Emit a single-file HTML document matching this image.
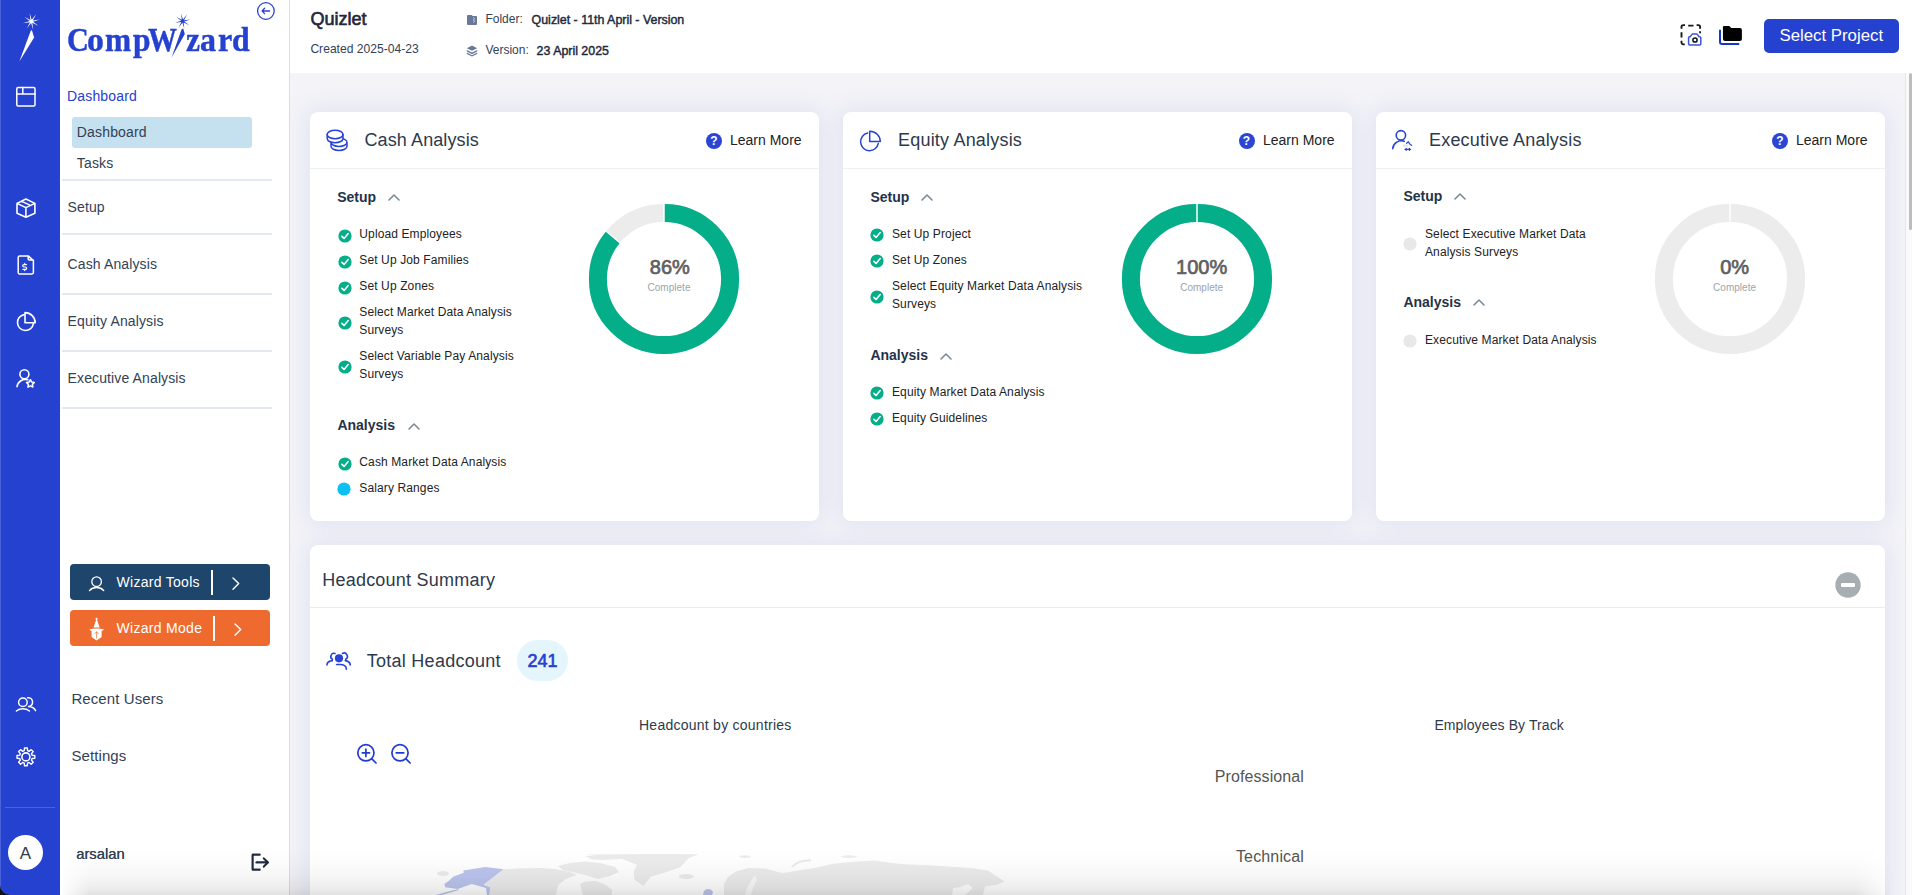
<!DOCTYPE html>
<html><head><meta charset="utf-8"><style>
html,body{margin:0;padding:0;width:1912px;height:895px;overflow:hidden;background:#fff;position:relative;}
body{font-family:"Liberation Sans",sans-serif;}
.t{position:absolute;white-space:nowrap;line-height:1;}
svg{overflow:visible;}
</style></head><body>
<div style="position:absolute;left:290px;top:0px;width:1622px;height:73px;background:#fff;"></div>
<div style="position:absolute;left:290px;top:73px;width:1615px;height:822px;background:#f3f3f8;"></div>
<div style="position:absolute;left:310px;top:112px;width:509px;height:409px;background:#fff;border-radius:8px;box-shadow:0 0 22px 4px rgba(120,130,200,0.13);"></div>
<div style="position:absolute;left:310px;top:168px;width:509px;height:1px;background:#eef0f3;"></div>
<div style="position:absolute;left:843px;top:112px;width:509px;height:409px;background:#fff;border-radius:8px;box-shadow:0 0 22px 4px rgba(120,130,200,0.13);"></div>
<div style="position:absolute;left:843px;top:168px;width:509px;height:1px;background:#eef0f3;"></div>
<div style="position:absolute;left:1376px;top:112px;width:509px;height:409px;background:#fff;border-radius:8px;box-shadow:0 0 22px 4px rgba(120,130,200,0.13);"></div>
<div style="position:absolute;left:1376px;top:168px;width:509px;height:1px;background:#eef0f3;"></div>
<div style="position:absolute;left:310px;top:545px;width:1575px;height:400px;background:#fff;border-radius:8px;box-shadow:0 0 22px 4px rgba(120,130,200,0.13);"></div>
<div style="position:absolute;left:303px;top:607px;width:1582px;height:1px;background:#e1eff9;"></div>
<div class="t" style="left:364.5px;top:130.76px;font-size:18px;color:#2d3a4b;font-weight:400;font-family:'Liberation Sans', sans-serif;letter-spacing:0.1px;">Cash Analysis</div>
<div class="t" style="left:730px;top:133.05px;font-size:14px;color:#222;font-weight:400;font-family:'Liberation Sans', sans-serif;">Learn More</div>
<svg style="position:absolute;left:706px;top:133px;" width="16" height="16" viewBox="0 0 16 16" fill="none"><circle cx="8" cy="8" r="8" fill="#2b45d4"/></svg>
<div class="t" style="left:714px;transform:translateX(-50%);top:135.44px;font-size:12px;color:#fff;font-weight:700;font-family:'Liberation Sans', sans-serif;">?</div>
<div class="t" style="left:337.2px;top:190.45px;font-size:14px;color:#1f3349;font-weight:700;font-family:'Liberation Sans', sans-serif;">Setup</div>
<svg style="position:absolute;left:388px;top:193px;" width="12" height="8" viewBox="0 0 12 8" fill="none"><path d="M1 7 L6 2 L11 7" stroke="#7b8a96" stroke-width="1.6" stroke-linecap="round" stroke-linejoin="round"/></svg>
<div class="t" style="left:359.3px;top:227.84px;font-size:12px;color:#222;font-weight:400;font-family:'Liberation Sans', sans-serif;letter-spacing:0.12px;">Upload Employees</div>
<svg style="position:absolute;left:337.5px;top:228.5px;" width="14" height="14" viewBox="0 0 14 14" fill="none"><circle cx="7" cy="7" r="6.6" fill="#03ae88"/><path d="M3.9 7.3 L6.1 9.4 L10.2 4.6" stroke="#fff" stroke-width="1.6" stroke-linecap="round" stroke-linejoin="round"/></svg>
<div class="t" style="left:359.3px;top:253.84px;font-size:12px;color:#222;font-weight:400;font-family:'Liberation Sans', sans-serif;letter-spacing:0.12px;">Set Up Job Families</div>
<svg style="position:absolute;left:337.5px;top:254.5px;" width="14" height="14" viewBox="0 0 14 14" fill="none"><circle cx="7" cy="7" r="6.6" fill="#03ae88"/><path d="M3.9 7.3 L6.1 9.4 L10.2 4.6" stroke="#fff" stroke-width="1.6" stroke-linecap="round" stroke-linejoin="round"/></svg>
<div class="t" style="left:359.3px;top:279.84px;font-size:12px;color:#222;font-weight:400;font-family:'Liberation Sans', sans-serif;letter-spacing:0.12px;">Set Up Zones</div>
<svg style="position:absolute;left:337.5px;top:280.5px;" width="14" height="14" viewBox="0 0 14 14" fill="none"><circle cx="7" cy="7" r="6.6" fill="#03ae88"/><path d="M3.9 7.3 L6.1 9.4 L10.2 4.6" stroke="#fff" stroke-width="1.6" stroke-linecap="round" stroke-linejoin="round"/></svg>
<div class="t" style="left:359.3px;top:305.84px;font-size:12px;color:#222;font-weight:400;font-family:'Liberation Sans', sans-serif;letter-spacing:0.12px;">Select Market Data Analysis</div>
<div class="t" style="left:359.3px;top:323.84px;font-size:12px;color:#222;font-weight:400;font-family:'Liberation Sans', sans-serif;letter-spacing:0.12px;">Surveys</div>
<svg style="position:absolute;left:337.5px;top:315.5px;" width="14" height="14" viewBox="0 0 14 14" fill="none"><circle cx="7" cy="7" r="6.6" fill="#03ae88"/><path d="M3.9 7.3 L6.1 9.4 L10.2 4.6" stroke="#fff" stroke-width="1.6" stroke-linecap="round" stroke-linejoin="round"/></svg>
<div class="t" style="left:359.3px;top:349.84px;font-size:12px;color:#222;font-weight:400;font-family:'Liberation Sans', sans-serif;letter-spacing:0.12px;">Select Variable Pay Analysis</div>
<div class="t" style="left:359.3px;top:367.84px;font-size:12px;color:#222;font-weight:400;font-family:'Liberation Sans', sans-serif;letter-spacing:0.12px;">Surveys</div>
<svg style="position:absolute;left:337.5px;top:359.5px;" width="14" height="14" viewBox="0 0 14 14" fill="none"><circle cx="7" cy="7" r="6.6" fill="#03ae88"/><path d="M3.9 7.3 L6.1 9.4 L10.2 4.6" stroke="#fff" stroke-width="1.6" stroke-linecap="round" stroke-linejoin="round"/></svg>
<div class="t" style="left:337.4px;top:418.25px;font-size:14px;color:#1f3349;font-weight:700;font-family:'Liberation Sans', sans-serif;">Analysis</div>
<svg style="position:absolute;left:407.5px;top:422px;" width="12" height="8" viewBox="0 0 12 8" fill="none"><path d="M1 7 L6 2 L11 7" stroke="#7b8a96" stroke-width="1.6" stroke-linecap="round" stroke-linejoin="round"/></svg>
<div class="t" style="left:359.3px;top:455.94px;font-size:12px;color:#222;font-weight:400;font-family:'Liberation Sans', sans-serif;letter-spacing:0.12px;">Cash Market Data Analysis</div>
<svg style="position:absolute;left:337.5px;top:456.6px;" width="14" height="14" viewBox="0 0 14 14" fill="none"><circle cx="7" cy="7" r="6.6" fill="#03ae88"/><path d="M3.9 7.3 L6.1 9.4 L10.2 4.6" stroke="#fff" stroke-width="1.6" stroke-linecap="round" stroke-linejoin="round"/></svg>
<div class="t" style="left:359.3px;top:481.84px;font-size:12px;color:#222;font-weight:400;font-family:'Liberation Sans', sans-serif;letter-spacing:0.12px;">Salary Ranges</div>
<svg style="position:absolute;left:337.3px;top:482.4px;" width="14" height="14" viewBox="0 0 14 14" fill="none"><circle cx="7" cy="7" r="6.6" fill="#0cc0f3"/></svg>
<svg style="position:absolute;left:584.4px;top:198.5px;" width="160" height="160" viewBox="0 0 160 160" fill="none"><circle cx="80" cy="80" r="66.1" stroke="#ececec" stroke-width="18"/><circle cx="80" cy="80" r="66.1" stroke="#03ae88" stroke-width="18" stroke-dasharray="357.17 415.32" transform="rotate(-90 80 80)"/><line x1="80" y1="2" x2="80" y2="24" stroke="#fff" stroke-width="1.5"/><line x1="36.85" y1="44.30" x2="20.67" y2="30.92" stroke="#fff" stroke-width="1.5"/></svg>
<div class="t" style="left:669.8px;transform:translateX(-50%);top:257.37px;font-size:20px;color:#606060;font-weight:400;font-family:'Liberation Sans', sans-serif;-webkit-text-stroke:0.70px #606060;">86%</div>
<div class="t" style="left:669px;transform:translateX(-50%);top:283.24px;font-size:10px;color:#9ba4aa;font-weight:400;font-family:'Liberation Sans', sans-serif;letter-spacing:0.03px;">Complete</div>
<div class="t" style="left:898px;top:130.76px;font-size:18px;color:#2d3a4b;font-weight:400;font-family:'Liberation Sans', sans-serif;letter-spacing:0.2px;">Equity Analysis</div>
<div class="t" style="left:1263px;top:133.05px;font-size:14px;color:#222;font-weight:400;font-family:'Liberation Sans', sans-serif;">Learn More</div>
<svg style="position:absolute;left:1238.5px;top:133px;" width="16" height="16" viewBox="0 0 16 16" fill="none"><circle cx="8" cy="8" r="8" fill="#2b45d4"/></svg>
<div class="t" style="left:1246.5px;transform:translateX(-50%);top:135.44px;font-size:12px;color:#fff;font-weight:700;font-family:'Liberation Sans', sans-serif;">?</div>
<div class="t" style="left:870.4px;top:190.15px;font-size:14px;color:#1f3349;font-weight:700;font-family:'Liberation Sans', sans-serif;">Setup</div>
<svg style="position:absolute;left:921px;top:193px;" width="12" height="8" viewBox="0 0 12 8" fill="none"><path d="M1 7 L6 2 L11 7" stroke="#7b8a96" stroke-width="1.6" stroke-linecap="round" stroke-linejoin="round"/></svg>
<div class="t" style="left:892px;top:228.04px;font-size:12px;color:#222;font-weight:400;font-family:'Liberation Sans', sans-serif;letter-spacing:0.12px;">Set Up Project</div>
<svg style="position:absolute;left:870.3px;top:228.39999999999998px;" width="14" height="14" viewBox="0 0 14 14" fill="none"><circle cx="7" cy="7" r="6.6" fill="#03ae88"/><path d="M3.9 7.3 L6.1 9.4 L10.2 4.6" stroke="#fff" stroke-width="1.6" stroke-linecap="round" stroke-linejoin="round"/></svg>
<div class="t" style="left:892px;top:254.04px;font-size:12px;color:#222;font-weight:400;font-family:'Liberation Sans', sans-serif;letter-spacing:0.12px;">Set Up Zones</div>
<svg style="position:absolute;left:870.3px;top:254.39999999999998px;" width="14" height="14" viewBox="0 0 14 14" fill="none"><circle cx="7" cy="7" r="6.6" fill="#03ae88"/><path d="M3.9 7.3 L6.1 9.4 L10.2 4.6" stroke="#fff" stroke-width="1.6" stroke-linecap="round" stroke-linejoin="round"/></svg>
<div class="t" style="left:892px;top:280.34px;font-size:12px;color:#222;font-weight:400;font-family:'Liberation Sans', sans-serif;letter-spacing:0.12px;">Select Equity Market Data Analysis</div>
<div class="t" style="left:892px;top:298.34px;font-size:12px;color:#222;font-weight:400;font-family:'Liberation Sans', sans-serif;letter-spacing:0.12px;">Surveys</div>
<svg style="position:absolute;left:870.3px;top:289.7px;" width="14" height="14" viewBox="0 0 14 14" fill="none"><circle cx="7" cy="7" r="6.6" fill="#03ae88"/><path d="M3.9 7.3 L6.1 9.4 L10.2 4.6" stroke="#fff" stroke-width="1.6" stroke-linecap="round" stroke-linejoin="round"/></svg>
<div class="t" style="left:870.4px;top:348.45px;font-size:14px;color:#1f3349;font-weight:700;font-family:'Liberation Sans', sans-serif;">Analysis</div>
<svg style="position:absolute;left:940px;top:352px;" width="12" height="8" viewBox="0 0 12 8" fill="none"><path d="M1 7 L6 2 L11 7" stroke="#7b8a96" stroke-width="1.6" stroke-linecap="round" stroke-linejoin="round"/></svg>
<div class="t" style="left:892px;top:386.04px;font-size:12px;color:#222;font-weight:400;font-family:'Liberation Sans', sans-serif;letter-spacing:0.12px;">Equity Market Data Analysis</div>
<svg style="position:absolute;left:870.3px;top:385.8px;" width="14" height="14" viewBox="0 0 14 14" fill="none"><circle cx="7" cy="7" r="6.6" fill="#03ae88"/><path d="M3.9 7.3 L6.1 9.4 L10.2 4.6" stroke="#fff" stroke-width="1.6" stroke-linecap="round" stroke-linejoin="round"/></svg>
<div class="t" style="left:892px;top:411.94px;font-size:12px;color:#222;font-weight:400;font-family:'Liberation Sans', sans-serif;letter-spacing:0.12px;">Equity Guidelines</div>
<svg style="position:absolute;left:870.3px;top:411.7px;" width="14" height="14" viewBox="0 0 14 14" fill="none"><circle cx="7" cy="7" r="6.6" fill="#03ae88"/><path d="M3.9 7.3 L6.1 9.4 L10.2 4.6" stroke="#fff" stroke-width="1.6" stroke-linecap="round" stroke-linejoin="round"/></svg>
<svg style="position:absolute;left:1116.6px;top:198.5px;" width="160" height="160" viewBox="0 0 160 160" fill="none"><circle cx="80" cy="80" r="66.1" stroke="#ececec" stroke-width="18"/><circle cx="80" cy="80" r="66.1" stroke="#03ae88" stroke-width="18" stroke-dasharray="415.32 415.32" transform="rotate(-90 80 80)"/><line x1="80" y1="2" x2="80" y2="24" stroke="#fff" stroke-width="1.5"/></svg>
<div class="t" style="left:1201.7px;transform:translateX(-50%);top:257.37px;font-size:20px;color:#606060;font-weight:400;font-family:'Liberation Sans', sans-serif;-webkit-text-stroke:0.70px #606060;">100%</div>
<div class="t" style="left:1201.7px;transform:translateX(-50%);top:283.24px;font-size:10px;color:#9ba4aa;font-weight:400;font-family:'Liberation Sans', sans-serif;letter-spacing:0.03px;">Complete</div>
<div class="t" style="left:1429px;top:130.76px;font-size:18px;color:#2d3a4b;font-weight:400;font-family:'Liberation Sans', sans-serif;letter-spacing:0.2px;">Executive Analysis</div>
<div class="t" style="left:1796px;top:133.05px;font-size:14px;color:#222;font-weight:400;font-family:'Liberation Sans', sans-serif;">Learn More</div>
<svg style="position:absolute;left:1771.8px;top:133px;" width="16" height="16" viewBox="0 0 16 16" fill="none"><circle cx="8" cy="8" r="8" fill="#2b45d4"/></svg>
<div class="t" style="left:1779.8px;transform:translateX(-50%);top:135.44px;font-size:12px;color:#fff;font-weight:700;font-family:'Liberation Sans', sans-serif;">?</div>
<div class="t" style="left:1403.4px;top:189.15px;font-size:14px;color:#1f3349;font-weight:700;font-family:'Liberation Sans', sans-serif;">Setup</div>
<svg style="position:absolute;left:1454px;top:192px;" width="12" height="8" viewBox="0 0 12 8" fill="none"><path d="M1 7 L6 2 L11 7" stroke="#7b8a96" stroke-width="1.6" stroke-linecap="round" stroke-linejoin="round"/></svg>
<div class="t" style="left:1425px;top:228.04px;font-size:12px;color:#222;font-weight:400;font-family:'Liberation Sans', sans-serif;letter-spacing:0.12px;">Select Executive Market Data</div>
<div class="t" style="left:1425px;top:246.04px;font-size:12px;color:#222;font-weight:400;font-family:'Liberation Sans', sans-serif;letter-spacing:0.12px;">Analysis Surveys</div>
<svg style="position:absolute;left:1403.3px;top:236.5px;" width="14" height="14" viewBox="0 0 14 14" fill="none"><circle cx="7" cy="7" r="6.6" fill="#e8e8e8"/></svg>
<div class="t" style="left:1403.4px;top:295.15px;font-size:14px;color:#1f3349;font-weight:700;font-family:'Liberation Sans', sans-serif;">Analysis</div>
<svg style="position:absolute;left:1473px;top:298px;" width="12" height="8" viewBox="0 0 12 8" fill="none"><path d="M1 7 L6 2 L11 7" stroke="#7b8a96" stroke-width="1.6" stroke-linecap="round" stroke-linejoin="round"/></svg>
<div class="t" style="left:1425px;top:334.24px;font-size:12px;color:#222;font-weight:400;font-family:'Liberation Sans', sans-serif;letter-spacing:0.12px;">Executive Market Data Analysis</div>
<svg style="position:absolute;left:1403.3px;top:333.5px;" width="14" height="14" viewBox="0 0 14 14" fill="none"><circle cx="7" cy="7" r="6.6" fill="#e8e8e8"/></svg>
<svg style="position:absolute;left:1649.9px;top:198.5px;" width="160" height="160" viewBox="0 0 160 160" fill="none"><circle cx="80" cy="80" r="66.1" stroke="#ececec" stroke-width="18"/><line x1="80" y1="2" x2="80" y2="24" stroke="#fff" stroke-width="1.5"/></svg>
<div class="t" style="left:1734.6px;transform:translateX(-50%);top:257.37px;font-size:20px;color:#606060;font-weight:400;font-family:'Liberation Sans', sans-serif;-webkit-text-stroke:0.70px #606060;">0%</div>
<div class="t" style="left:1734.6px;transform:translateX(-50%);top:283.24px;font-size:10px;color:#9ba4aa;font-weight:400;font-family:'Liberation Sans', sans-serif;letter-spacing:0.03px;">Complete</div>
<div class="t" style="left:322.2px;top:571.26px;font-size:18px;color:#2d3a4b;font-weight:400;font-family:'Liberation Sans', sans-serif;letter-spacing:0.23px;">Headcount Summary</div>
<svg style="position:absolute;left:1835px;top:572px;" width="26" height="26" viewBox="0 0 26 26" fill="none"><circle cx="13" cy="13" r="12.7" fill="#a6aeb2"/><rect x="6" y="11" width="14" height="4" rx="1" fill="#fff"/></svg>
<div class="t" style="left:366.7px;top:651.76px;font-size:18px;color:#2d3a4b;font-weight:400;font-family:'Liberation Sans', sans-serif;letter-spacing:0.27px;">Total Headcount</div>
<div style="position:absolute;left:517px;top:640px;width:51px;height:41px;background:#e5f5fc;border-radius:21px;"></div>
<div class="t" style="left:542.5px;transform:translateX(-50%);top:651.76px;font-size:18px;color:#2541cf;font-weight:400;font-family:'Liberation Sans', sans-serif;-webkit-text-stroke:0.63px #2541cf;">241</div>
<div class="t" style="left:715.3px;transform:translateX(-50%);top:717.85px;font-size:14px;color:#2d3a4b;font-weight:400;font-family:'Liberation Sans', sans-serif;letter-spacing:0.25px;">Headcount by countries</div>
<div class="t" style="left:1499.2px;transform:translateX(-50%);top:718.35px;font-size:14px;color:#2d3a4b;font-weight:400;font-family:'Liberation Sans', sans-serif;letter-spacing:0.11px;">Employees By Track</div>
<div class="t" style="right:608px;top:769.26px;font-size:16px;color:#555;font-weight:400;font-family:'Liberation Sans', sans-serif;letter-spacing:0.1px;">Professional</div>
<div class="t" style="right:608px;top:849.26px;font-size:16px;color:#555;font-weight:400;font-family:'Liberation Sans', sans-serif;letter-spacing:0.15px;">Technical</div>
<div class="t" style="left:310.4px;top:9.56px;font-size:18px;color:#1e293b;font-weight:400;font-family:'Liberation Sans', sans-serif;-webkit-text-stroke:0.63px #1e293b;">Quizlet</div>
<div class="t" style="left:310.4px;top:43.06px;font-size:12.1px;color:#334155;font-weight:400;font-family:'Liberation Sans', sans-serif;">Created 2025-04-23</div>
<div class="t" style="left:485.4px;top:12.94px;font-size:12px;color:#334155;font-weight:400;font-family:'Liberation Sans', sans-serif;">Folder:</div>
<div class="t" style="left:531.6px;top:13.50px;font-size:12.4px;color:#1e293b;font-weight:400;font-family:'Liberation Sans', sans-serif;-webkit-text-stroke:0.43px #1e293b;">Quizlet - 11th April - Version</div>
<div class="t" style="left:485.4px;top:43.84px;font-size:12px;color:#334155;font-weight:400;font-family:'Liberation Sans', sans-serif;">Version:</div>
<div class="t" style="left:536.6px;top:44.90px;font-size:12.4px;color:#1e293b;font-weight:400;font-family:'Liberation Sans', sans-serif;-webkit-text-stroke:0.43px #1e293b;">23 April 2025</div>
<div style="position:absolute;left:1764px;top:19px;width:135px;height:34px;background:#2541cf;border-radius:5px;"></div>
<div class="t" style="left:1831.3px;transform:translateX(-50%);top:27.68px;font-size:16.8px;color:#fff;font-weight:400;font-family:'Liberation Sans', sans-serif;">Select Project</div>
<div style="position:absolute;left:0px;top:0px;width:60px;height:895px;background:#2541cf;"></div>
<div style="position:absolute;left:0px;top:0px;width:1px;height:895px;background:#4a63d8;"></div>
<div style="position:absolute;left:60px;top:0px;width:230px;height:895px;background:#fff;"></div>
<div style="position:absolute;left:289px;top:0px;width:1px;height:895px;background:#dcdcdc;"></div>
<div class="t" style="left:67px;top:88.85px;font-size:14px;color:#2541cf;font-weight:400;font-family:'Liberation Sans', sans-serif;letter-spacing:0.17px;">Dashboard</div>
<div style="position:absolute;left:72px;top:117px;width:180px;height:31px;background:#c5e0ee;border-radius:3px;"></div>
<div class="t" style="left:76.8px;top:125.15px;font-size:14px;color:#334155;font-weight:400;font-family:'Liberation Sans', sans-serif;letter-spacing:0.17px;">Dashboard</div>
<div class="t" style="left:76.8px;top:156.15px;font-size:14px;color:#334155;font-weight:400;font-family:'Liberation Sans', sans-serif;letter-spacing:0.17px;">Tasks</div>
<div style="position:absolute;left:62px;top:179px;width:210px;height:2px;background:#e4e8ef;"></div>
<div style="position:absolute;left:62px;top:233px;width:210px;height:2px;background:#e4e8ef;"></div>
<div style="position:absolute;left:62px;top:293px;width:210px;height:2px;background:#e4e8ef;"></div>
<div style="position:absolute;left:62px;top:350px;width:210px;height:2px;background:#e4e8ef;"></div>
<div style="position:absolute;left:62px;top:407px;width:210px;height:2px;background:#e4e8ef;"></div>
<div class="t" style="left:67.6px;top:200.15px;font-size:14px;color:#334155;font-weight:400;font-family:'Liberation Sans', sans-serif;letter-spacing:0.12px;">Setup</div>
<div class="t" style="left:67.6px;top:257.15px;font-size:14px;color:#334155;font-weight:400;font-family:'Liberation Sans', sans-serif;letter-spacing:0.12px;">Cash Analysis</div>
<div class="t" style="left:67.6px;top:314.15px;font-size:14px;color:#334155;font-weight:400;font-family:'Liberation Sans', sans-serif;letter-spacing:0.12px;">Equity Analysis</div>
<div class="t" style="left:67.6px;top:371.15px;font-size:14px;color:#334155;font-weight:400;font-family:'Liberation Sans', sans-serif;letter-spacing:0.12px;">Executive Analysis</div>
<div style="position:absolute;left:70px;top:564px;width:200px;height:36px;background:#1e456b;border-radius:4px;"></div>
<div class="t" style="left:116.6px;top:575.25px;font-size:14px;color:#fff;font-weight:400;font-family:'Liberation Sans', sans-serif;letter-spacing:0.28px;">Wizard Tools</div>
<div style="position:absolute;left:211px;top:570px;width:2px;height:25px;background:#fff;"></div>
<div style="position:absolute;left:70px;top:610px;width:200px;height:36px;background:#ee6a2e;border-radius:4px;"></div>
<div class="t" style="left:116.6px;top:621.35px;font-size:14px;color:#fff;font-weight:400;font-family:'Liberation Sans', sans-serif;letter-spacing:0.29px;">Wizard Mode</div>
<div style="position:absolute;left:213px;top:616px;width:2px;height:25px;background:#fff;"></div>
<div class="t" style="left:71.4px;top:691.30px;font-size:15px;color:#334155;font-weight:400;font-family:'Liberation Sans', sans-serif;letter-spacing:0.1px;">Recent Users</div>
<div class="t" style="left:71.4px;top:748.30px;font-size:15px;color:#334155;font-weight:400;font-family:'Liberation Sans', sans-serif;letter-spacing:0.1px;">Settings</div>
<div class="t" style="left:76.2px;top:846.87px;font-size:14.8px;color:#334155;font-weight:400;font-family:'Liberation Sans', sans-serif;">arsalan</div>
<div class="t" style="left:66.8px;top:22.9px;font-size:34px;font-weight:700;color:#2541cf;font-family:'Liberation Serif',serif;-webkit-text-stroke:0.45px #2541cf;transform-origin:0 0;transform:scaleX(0.889);">C</div>
<div class="t" style="left:87.3px;top:22.9px;font-size:34px;font-weight:700;color:#2541cf;font-family:'Liberation Serif',serif;-webkit-text-stroke:0.45px #2541cf;transform-origin:0 0;transform:scaleX(0.995);">o</div>
<div class="t" style="left:105.2px;top:22.9px;font-size:34px;font-weight:700;color:#2541cf;font-family:'Liberation Serif',serif;-webkit-text-stroke:0.45px #2541cf;transform-origin:0 0;transform:scaleX(0.922);">m</div>
<div class="t" style="left:132.5px;top:22.9px;font-size:34px;font-weight:700;color:#2541cf;font-family:'Liberation Serif',serif;-webkit-text-stroke:0.45px #2541cf;transform-origin:0 0;transform:scaleX(0.929);">p</div>
<div class="t" style="left:147.6px;top:22.9px;font-size:34px;font-weight:700;color:#2541cf;font-family:'Liberation Serif',serif;-webkit-text-stroke:0.45px #2541cf;transform-origin:0 0;transform:scaleX(0.85);">W</div>
<div class="t" style="left:186.3px;top:22.9px;font-size:34px;font-weight:700;color:#2541cf;font-family:'Liberation Serif',serif;-webkit-text-stroke:0.45px #2541cf;transform-origin:0 0;transform:scaleX(0.927);">z</div>
<div class="t" style="left:200.4px;top:22.9px;font-size:34px;font-weight:700;color:#2541cf;font-family:'Liberation Serif',serif;-webkit-text-stroke:0.45px #2541cf;transform-origin:0 0;transform:scaleX(0.94);">a</div>
<div class="t" style="left:217.7px;top:22.9px;font-size:34px;font-weight:700;color:#2541cf;font-family:'Liberation Serif',serif;-webkit-text-stroke:0.45px #2541cf;transform-origin:0 0;transform:scaleX(0.94);">r</div>
<div class="t" style="left:231.7px;top:22.9px;font-size:34px;font-weight:700;color:#2541cf;font-family:'Liberation Serif',serif;-webkit-text-stroke:0.45px #2541cf;transform-origin:0 0;transform:scaleX(0.934);">d</div>
<div style="position:absolute;left:8px;top:835px;width:35px;height:35px;background:#fff;border-radius:50%;"></div>
<div class="t" style="left:25.5px;transform:translateX(-50%);top:844.61px;font-size:17px;color:#2d3a4b;font-weight:400;font-family:'Liberation Sans', sans-serif;">A</div>
<div style="position:absolute;left:5px;top:807px;width:50px;height:1px;background:rgba(255,255,255,0.18);"></div>
<svg style="position:absolute;left:320px;top:124px;" width="36" height="32" viewBox="0 0 36 32" fill="none"><path d="M11 18.3 A8 4.2 0 0 0 27 18.3 A8 4.2 0 0 0 11 18.3 Z M11 18.3 V22.3 A8 4.2 0 0 0 27 22.3 V18.3" stroke="#2742d6" stroke-width="1.5" stroke-linecap="round" stroke-linejoin="round" fill="#fff"/><path d="M7.2 10.5 A7.9 4.2 0 0 1 23 10.5 V14.5 A7.9 4.2 0 0 1 7.2 14.5 Z" stroke="#2742d6" stroke-width="1.5" stroke-linecap="round" stroke-linejoin="round" fill="#fff"/><path d="M7.2 10.5 A7.9 4.2 0 0 0 23 10.5" stroke="#2742d6" stroke-width="1.5" stroke-linecap="round" stroke-linejoin="round"/></svg>
<svg style="position:absolute;left:852px;top:124px;" width="36" height="36" viewBox="0 0 36 36" fill="none"><path d="M15.6 9.1 A8.9 8.9 0 1 0 26.3 19.4" stroke="#2742d6" stroke-width="1.5" stroke-linecap="round" stroke-linejoin="round"/><path d="M17.7 7.2 V17.5 H28.3 A10.6 10.3 0 0 0 17.7 7.2 Z" stroke="#2742d6" stroke-width="1.5" stroke-linecap="round" stroke-linejoin="round"/></svg>
<svg style="position:absolute;left:1386px;top:124px;" width="32" height="32" viewBox="0 0 32 32" fill="none"><circle cx="14.9" cy="11.3" r="4.7" stroke="#2742d6" stroke-width="1.6" stroke-linecap="round" stroke-linejoin="round"/><path d="M6.7 24.6 A8.8 8.8 0 0 1 18.3 17.3" stroke="#2742d6" stroke-width="1.6" stroke-linecap="round" stroke-linejoin="round"/><path d="M20.6 19.2 L22.3 17.8 L24.2 20.5 L25.6 21.3" stroke="#2742d6" stroke-width="1.3" stroke-linecap="round" stroke-linejoin="round"/><path d="M19 25.4 H24.6 M20.2 24.5 V26.3 M23.4 24.5 V26.3" stroke="#2742d6" stroke-width="1.3" stroke-linecap="round" stroke-linejoin="round"/><ellipse cx="19.5" cy="21.5" rx="3" ry="1.5" fill="#e9e9e9"/></svg>
<svg style="position:absolute;left:10px;top:75px;" width="32" height="32" viewBox="0 0 32 32" fill="none"><rect x="6.8" y="12.6" width="18.2" height="18.3" rx="1.2" stroke="#fff" stroke-width="1.5" stroke-linecap="round" stroke-linejoin="round"/><path d="M6.8 19.1 H25 M12.8 12.6 V19.1" stroke="#fff" stroke-width="1.5" stroke-linecap="round" stroke-linejoin="round"/></svg>
<svg style="position:absolute;left:10px;top:192px;" width="32" height="32" viewBox="0 0 32 32" fill="none"><path d="M15.9 7 L24.9 11.4 V21.3 L15.9 25.3 L7 21.3 V11.4 Z M7 11.4 L15.9 15.6 L24.9 11.4 M15.9 15.6 V25.3 M11.3 9.1 L20.4 13.4" stroke="#fff" stroke-width="1.6" stroke-linecap="round" stroke-linejoin="round"/></svg>
<svg style="position:absolute;left:10px;top:249px;" width="32" height="32" viewBox="0 0 32 32" fill="none"><path d="M18.2 6.9 V10 A1 1 0 0 0 19.2 11 H23.2 M21.7 25 H9.8 A1.6 1.6 0 0 1 8.2 23.4 V8.5 A1.6 1.6 0 0 1 9.8 6.9 H18.2 L23.4 11.6 V23.4 A1.6 1.6 0 0 1 21.7 25 Z" stroke="#fff" stroke-width="1.5" stroke-linecap="round" stroke-linejoin="round"/><path d="M16.4 15.6 H13.9 A1.2 1.2 0 0 0 13.9 18 H15.4 A1.2 1.2 0 0 1 15.4 20.4 H12.9 M14.7 20.4 V21.6 M14.7 14.4 V15.6" stroke="#fff" stroke-width="1.2" stroke-linecap="round" stroke-linejoin="round"/></svg>
<svg style="position:absolute;left:10px;top:305px;" width="32" height="32" viewBox="0 0 32 32" fill="none"><path d="M14 9.6 A8 8 0 1 0 23.4 18.6" stroke="#fff" stroke-width="1.6" stroke-linecap="round" stroke-linejoin="round"/><path d="M15 7.6 V17.7 H25.2 A10.2 10.1 0 0 0 15 7.6 Z" stroke="#fff" stroke-width="1.6" stroke-linecap="round" stroke-linejoin="round"/></svg>
<svg style="position:absolute;left:10px;top:362px;" width="32" height="32" viewBox="0 0 32 32" fill="none"><circle cx="14.4" cy="12.3" r="4.5" stroke="#fff" stroke-width="1.6" stroke-linecap="round" stroke-linejoin="round"/><path d="M7 24.6 A8.5 8.5 0 0 1 17.8 17.8" stroke="#fff" stroke-width="1.6" stroke-linecap="round" stroke-linejoin="round"/><path d="M20.4 17.7 L21.7 20.1 L24.3 20.5 L22.4 22.4 L22.9 25.1 L20.4 23.8 L17.9 25.1 L18.4 22.4 L16.5 20.5 L19.1 20.1 Z" stroke="#fff" stroke-width="1.5" stroke-linecap="round" stroke-linejoin="round"/></svg>
<svg style="position:absolute;left:10px;top:688px;" width="32" height="32" viewBox="0 0 32 32" fill="none"><circle cx="12.9" cy="14.3" r="4.3" stroke="#fff" stroke-width="1.5" stroke-linecap="round" stroke-linejoin="round"/><path d="M6.4 23 A9 7 0 0 1 19.4 23" stroke="#fff" stroke-width="1.5" stroke-linecap="round" stroke-linejoin="round"/><path d="M17.6 9.7 A4.3 4.3 0 0 1 18.6 18.6 A8 7 0 0 1 25.6 22.7" stroke="#fff" stroke-width="1.5" stroke-linecap="round" stroke-linejoin="round"/></svg>
<svg style="position:absolute;left:10px;top:741px;" width="32" height="32" viewBox="0 0 32 32" fill="none"><path d="M14.24 9.72 L14.49 7.01 L17.31 7.01 L17.56 9.72 L19.10 10.36 L21.19 8.62 L23.18 10.61 L21.44 12.70 L22.08 14.24 L24.79 14.49 L24.79 17.31 L22.08 17.56 L21.44 19.10 L23.18 21.19 L21.19 23.18 L19.10 21.44 L17.56 22.08 L17.31 24.79 L14.49 24.79 L14.24 22.08 L12.70 21.44 L10.61 23.18 L8.62 21.19 L10.36 19.10 L9.72 17.56 L7.01 17.31 L7.01 14.49 L9.72 14.24 L10.36 12.70 L8.62 10.61 L10.61 8.62 L12.70 10.36 Z" stroke="#fff" stroke-width="1.4" stroke-linecap="round" stroke-linejoin="round"/><circle cx="15.9" cy="15.9" r="4.0" stroke="#fff" stroke-width="1.6" stroke-linecap="round" stroke-linejoin="round"/></svg>
<svg style="position:absolute;left:0px;top:0px;" width="60" height="70" viewBox="0 0 60 70" fill="none"><g style="color:#fff"><path d="M29.61 12.99 L31.71 19.73 L36.08 14.19 L32.80 20.44 L39.81 19.61 L33.07 21.71 L38.61 26.08 L32.36 22.80 L33.19 29.81 L31.09 23.07 L26.72 28.61 L30.00 22.36 L22.99 23.19 L29.73 21.09 L24.19 16.72 L30.44 20.00 Z" fill="currentColor"/></g><path d="M19.2 61.7 L30.9 30.6 L31.9 30.3 L34.1 37.6 Z" fill="#fff"/></svg>
<svg style="position:absolute;left:140px;top:8px;" width="60" height="55" viewBox="0 0 60 55" fill="none"><g style="color:#2541cf"><path d="M41.08 5.47 L42.99 11.53 L46.95 6.56 L44.02 12.19 L50.33 11.48 L44.27 13.39 L49.24 17.35 L43.61 14.42 L44.32 20.73 L42.41 14.67 L38.45 19.64 L41.38 14.01 L35.07 14.72 L41.13 12.81 L36.16 8.85 L41.79 11.78 Z" fill="currentColor"/></g><path d="M31.6 49.4 L41.6 21.3 L43.2 20.6 L44.8 26 Z" fill="#2541cf"/></svg>
<svg style="position:absolute;left:252px;top:0px;" width="30" height="24" viewBox="0 0 30 24" fill="none"><circle cx="13.9" cy="11" r="8.3" stroke="#2742d6" stroke-width="1.3" stroke-linecap="round" stroke-linejoin="round"/><path d="M10.2 11 H17.6 M12.6 8.3 L10.1 11 L12.6 13.6" stroke="#2742d6" stroke-width="1.3" stroke-linecap="round" stroke-linejoin="round"/></svg>
<svg style="position:absolute;left:1676px;top:20px;" width="72" height="30" viewBox="0 0 72 30" fill="none"><path d="M5.5 8.7 V6.9 A1.8 1.8 0 0 1 7.3 5.1 H9 M12.2 5.6 H17.5 M20.6 5.1 H22.3 A1.8 1.8 0 0 1 24.1 6.9 V8.7 M24.1 11.3 V13.2 M5.5 12.3 V17.6 M5.5 20.8 V22.6 A1.8 1.8 0 0 0 7.3 24.4 H8.8" stroke="#1a1a1a" stroke-width="1.9" stroke-linecap="butt"/><path d="M14.2 16.7 H13.6 A1 1 0 0 0 12.6 17.7 V23.9 A1 1 0 0 0 13.6 24.9 H23.8 A1 1 0 0 0 24.8 23.9 V17.7 A1 1 0 0 0 23.8 16.7 H23 L21.5 14.6 A1 1 0 0 0 20.7 14.1 H16.6 A1 1 0 0 0 15.8 14.6 Z" stroke="#3b55d9" stroke-width="1.5" stroke-linejoin="round"/><circle cx="19" cy="20" r="2.1" stroke="#111" stroke-width="1.5"/><path d="M46.9 6.5 A1.8 1.8 0 0 1 48.7 6 H52.7 A2 2 0 0 1 54.3 7 L55.1 8 H63.9 A2 2 0 0 1 65.9 10 V19 A2 2 0 0 1 63.9 21 H49 A2 2 0 0 1 47 19 Z" fill="#000"/><path d="M44 10.5 V22 A2 2 0 0 0 46 24 H62.5" stroke="#1537d0" stroke-width="2" stroke-linecap="round"/></svg>
<svg style="position:absolute;left:466px;top:14px;" width="12" height="12" viewBox="0 0 12 12" fill="none"><path d="M1 1.8 A1 1 0 0 1 2 0.9 H5.6 L6.8 1.9 H10 A1 1 0 0 1 11 2.9 V10 A1 1 0 0 1 10 11 H2 A1 1 0 0 1 1 10 Z" fill="#67789a"/><path d="M7.4 3.3 L8.4 4.6 L7.6 5.9 L8.4 7.2 L7.6 8.5" stroke="#fff" stroke-width="0.7" fill="none"/></svg>
<svg style="position:absolute;left:466px;top:45px;" width="12" height="12" viewBox="0 0 12 12" fill="none"><path d="M6 0.6 L11.2 3.2 L6 5.8 L0.8 3.2 Z" fill="#67789a"/><path d="M0.8 5 L6 7.6 L11.2 5 V6.6 L6 9.2 L0.8 6.6 Z M0.8 7.6 L6 10.2 L11.2 7.6 V9 L6 11.4 L0.8 9 Z" fill="#67789a"/></svg>
<svg style="position:absolute;left:84px;top:570px;" width="26" height="30" viewBox="0 0 26 30" fill="none"><circle cx="12.6" cy="11.7" r="4.8" stroke="#fff" stroke-width="1.3" stroke-linecap="round" stroke-linejoin="round"/><path d="M5.5 20.6 A8.6 7 0 0 1 19.7 20.6" stroke="#fff" stroke-width="1.4" stroke-linecap="round" stroke-linejoin="round"/></svg>
<svg style="position:absolute;left:84px;top:616px;" width="26" height="30" viewBox="0 0 26 30" fill="none"><path d="M12.6 2.5 L15.7 11.5 L9.5 11.5 Z" fill="#fff"/><circle cx="12.6" cy="2.8" r="1.1" fill="#fff"/><path d="M5 13.6 Q12.6 11.3 20.2 13.6 L17.6 15.2 V21 L12.6 24.6 L7.6 21 V15.2 Z" fill="#fff"/><path d="M12.6 15.4 V22.5 M10.5 17.5 L12.6 16.3 L14.7 17.5" stroke="#ee6a2e" stroke-width="0.7"/></svg>
<svg style="position:absolute;left:226px;top:570px;" width="20" height="26" viewBox="0 0 20 26" fill="none"><path d="M7 8 L12.7 13.6 L7 19.2" stroke="#fff" stroke-width="1.4" stroke-linecap="round" stroke-linejoin="round"/></svg>
<svg style="position:absolute;left:228px;top:616px;" width="20" height="26" viewBox="0 0 20 26" fill="none"><path d="M7 8 L12.7 13.6 L7 19.2" stroke="#fff" stroke-width="1.4" stroke-linecap="round" stroke-linejoin="round"/></svg>
<svg style="position:absolute;left:244px;top:846px;" width="32" height="32" viewBox="0 0 32 32" fill="none"><path d="M16.4 8.7 H8.6 V23.6 H16.4" stroke="#1e293b" stroke-width="1.7" stroke-linejoin="round"/><path d="M12.4 16.4 H24 M19.7 12.3 L24 16.4 L19.7 20.6" stroke="#1e293b" stroke-width="1.7" stroke-linecap="round" stroke-linejoin="round"/></svg>
<svg style="position:absolute;left:320px;top:640px;" width="40" height="40" viewBox="0 0 40 40" fill="none"><circle cx="19" cy="18.3" r="4.1" fill="#2742d6"/><path d="M16.6 24.5 H20.3 A6 4 0 0 1 26.3 28.5 V29.3" stroke="#2742d6" stroke-width="1.6" stroke-linecap="round" stroke-linejoin="round"/><path d="M15 13.5 A3.2 3.2 0 0 0 12.4 19.3 M12.4 20.6 A6.2 4.5 0 0 0 7 24.2 V25" stroke="#2742d6" stroke-width="1.6" stroke-linecap="round" stroke-linejoin="round"/><path d="M22.5 13.5 A3.2 3.2 0 0 1 25.6 19.3 M25.3 20.6 A6.2 4.5 0 0 1 30.2 24.2 V25" stroke="#2742d6" stroke-width="1.6" stroke-linecap="round" stroke-linejoin="round"/></svg>
<svg style="position:absolute;left:350px;top:738px;" width="70" height="32" viewBox="0 0 70 32" fill="none"><circle cx="15.9" cy="14.8" r="8.1" stroke="#1f3bd2" stroke-width="1.7" stroke-linecap="round" stroke-linejoin="round"/><path d="M21.9 20.8 L26 25 M12.3 14.8 H19.6 M15.9 11.2 V18.5" stroke="#1f3bd2" stroke-width="1.7" stroke-linecap="round" stroke-linejoin="round"/><circle cx="50" cy="14.8" r="8.1" stroke="#1f3bd2" stroke-width="1.7" stroke-linecap="round" stroke-linejoin="round"/><path d="M56 20.8 L60.1 25 M46.2 14.8 H53.8" stroke="#1f3bd2" stroke-width="1.7" stroke-linecap="round" stroke-linejoin="round"/></svg>
<svg style="position:absolute;left:420px;top:848px;" width="640" height="47" viewBox="0 0 640 47" fill="none"><path d="M43.5 22.6 L65.3 19.1 L83.7 21.3 L63.6 36.8 L70.3 39.3 L69.5 47 L67 47 L66 40 L51.9 36 L37.7 41 L25.1 39.3 L24.3 36 L29.3 32.6 L33.5 28.5 L43.5 25.1 Z M15.9 47 L30 43 L37.7 41.2 L39 42 L22 47 Z" fill="#bcc5ef"/><path d="M63.6 36.8 L83.7 21.3 L100 20.5 L120 20 L135 21 L150 24 L157 27 L146 31 L139 36 L137 41 L136 47 L69.5 47 L70.3 39.3 Z M160 36 L166 33.5 L176 33 L186 37 L192 42 L192 47 L163 47 Z M138 18 L150 15 L165 13.5 L180 15 L195 19 L199 24 L190 28 L178 31 L165 27 L152 24 L143 22 Z M165 8 L185 7 L205 8.5 L200 11 L185 12 L172 11.5 Z M165 6.6 L200 6.3 L240 6 L278.8 6.3 L268.8 10 L260.4 19.2 L243.7 25.1 L231.1 28.5 L223.6 37.7 L214.4 31.8 L213.6 24.3 L216.9 16.7 L197.7 9.2 Z M304 47 L303.9 36 L308 29 L316 23.5 L328 20 L345 20.5 L358 24 L363 25 L378 22.5 L395 20 L412 16 L430 14 L453.9 12.6 L480 15.9 L513.5 17.6 L551 20 L567.9 22.6 L584.6 33.5 L577 36.8 L565 38.5 L563 47 L545 47 L553 40 L548 36 L540 39 L533 40 L532 47 Z" fill="#ececec"/><path d="M334.5 27.6 L331 33 L327 40 L325 47 L331 47 L333 40 L337 32 Z" fill="#fafafa"/><ellipse cx="266.3" cy="28.5" rx="7.5" ry="2.4" fill="#ececec"/><ellipse cx="23" cy="25.5" rx="6" ry="2.5" fill="#ececec"/><ellipse cx="325" cy="8.6" rx="6" ry="1.3" fill="#ececec"/><ellipse cx="429" cy="8.6" rx="8" ry="1.3" fill="#ececec"/><path d="M372 19 Q378 12 391 12.3" stroke="#ececec" stroke-width="2.2"/><path d="M283 47 L284 43 L287 41 L291 41.5 L293 44 L292 47 Z" fill="#bcc5ef"/></svg>
<div style="position:absolute;left:1905px;top:73px;width:7px;height:822px;background:#fafafa;border-left:1px solid #e6e6e6;box-sizing:border-box;"></div>
<div style="position:absolute;left:1909px;top:73px;width:3px;height:157px;background:#bdbdbd;border-radius:2px;"></div>
<div style="position:absolute;left:60px;top:848px;width:1835px;height:47px;background:linear-gradient(to bottom, rgba(0,0,0,0) 0%, rgba(0,0,0,0.012) 30%, rgba(0,0,0,0.035) 60%, rgba(0,0,0,0.07) 85%, rgba(0,0,0,0.115) 100%);-webkit-mask-image:linear-gradient(to right, transparent 0, #000 30px, #000 calc(100% - 40px), transparent 100%);"></div>
<div class="t" style="left:76.2px;top:846.87px;font-size:14.8px;color:#334155;font-weight:400;font-family:'Liberation Sans', sans-serif;">arsalan</div>
<svg style="position:absolute;left:244px;top:846px;" width="32" height="32" viewBox="0 0 32 32" fill="none"><path d="M16.4 8.7 H8.6 V23.6 H16.4" stroke="#1e293b" stroke-width="1.7" stroke-linejoin="round"/><path d="M12.4 16.4 H24 M19.7 12.3 L24 16.4 L19.7 20.6" stroke="#1e293b" stroke-width="1.7" stroke-linecap="round" stroke-linejoin="round"/></svg>
<svg style="position:absolute;left:0px;top:885px;" width="10" height="10" viewBox="0 0 10 10" fill="none"><path d="M0 0 V10 H10 A10 10 0 0 1 0 0 Z" fill="#111"/></svg>
</body></html>
